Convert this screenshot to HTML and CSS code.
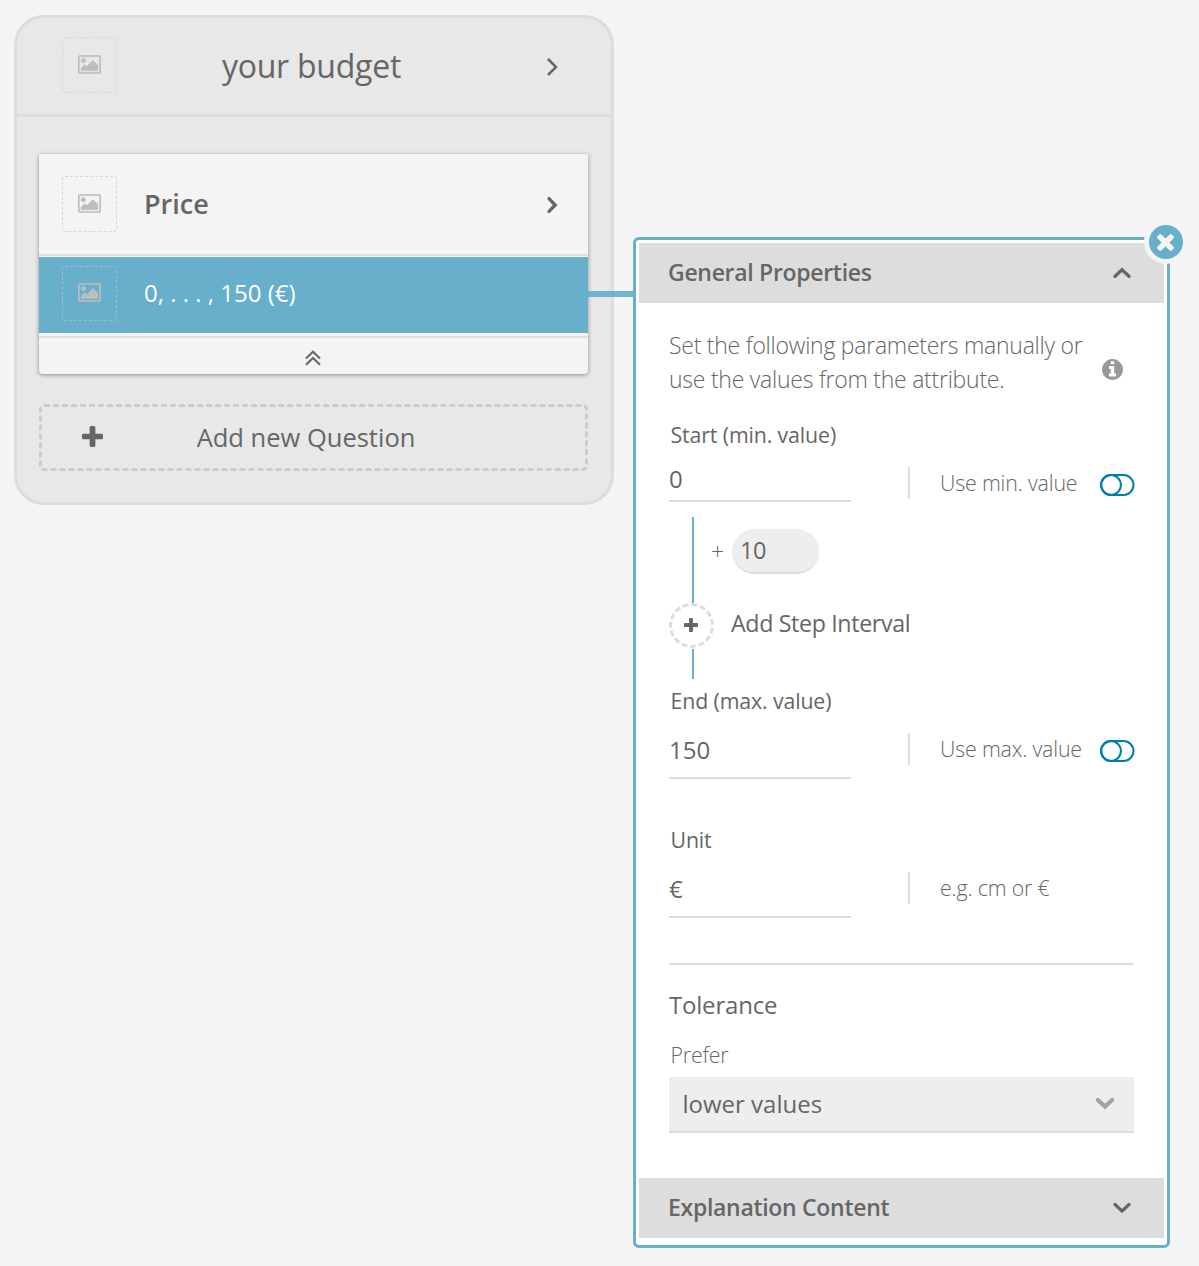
FILE: index.html
```html
<!DOCTYPE html>
<html lang="en">
<head>
<meta charset="utf-8">
<title>Question editor</title>
<link rel="stylesheet" href="styles.css">
</head>
<body>
<svg class="sprite" aria-hidden="true">
  <symbol id="picture" viewBox="-64 128 1920 1536"><path d="M576 576q0 80-56 136t-136 56-136-56-56-136 56-136 136-56 136 56 56 136zm1024 384v448h-1408v-192l320-320 160 160 512-512zm96-704h-1600q-13 0-22.5 9.5t-9.5 22.5v1216q0 13 9.5 22.5t22.5 9.5h1600q13 0 22.5-9.5t9.5-22.5v-1216q0-13-9.5-22.5t-22.5-9.5zm160 32v1216q0 66-47 113t-113 47h-1600q-66 0-113-47t-47-113v-1216q0-66 47-113t113-47h1600q66 0 113 47t47 113z"/></symbol>
  <symbol id="plus" viewBox="192 128 1408 1408"><path d="M1600 736v192q0 40-28 68t-68 28h-416v416q0 40-28 68t-68 28h-192q-40 0-68-28t-28-68v-416h-416q-40 0-68-28t-28-68v-192q0-40 28-68t68-28h416v-416q0-40 28-68t68-28h192q40 0 68 28t28 68v416h416q40 0 68 28t28 68z"/></symbol>
  <symbol id="toggle" viewBox="0 0 35 22"><rect x="1.1" y="1.1" width="32.4" height="19.8" rx="9.9"/><circle cx="11" cy="11" r="9.9"/></symbol>
</svg>
<main class="board">
  <section class="group">
    <header class="group-head">
      <span class="thumb"><svg class="pic"><use href="#picture"/></svg></span>
      <h1 class="group-title">your budget</h1>
      <svg class="chev thin" width="12" height="20" viewBox="0 0 12 20"><path d="M2 2l8 8-8 8"/></svg>
    </header>
    <div class="group-body">
      <article class="question">
        <div class="q-row">
          <span class="thumb"><svg class="pic"><use href="#picture"/></svg></span>
          <h2 class="q-title">Price</h2>
          <svg class="chev" width="12" height="20" viewBox="0 0 12 20"><path d="M3 3.6l6.2 6.4L3 16.4"/></svg>
        </div>
        <div class="a-row">
          <span class="thumb"><svg class="pic"><use href="#picture"/></svg></span>
          <span class="a-title">0, . . . , 150 (€)</span>
        </div>
        <div class="q-foot">
          <svg class="chev double" width="18" height="18" viewBox="0 0 18 18"><path d="M2 9.5L9 2.8l7 6.7M2 15.7L9 9l7 6.7"/></svg>
        </div>
      </article>
      <div class="add-question">
        <svg class="add-plus"><use href="#plus"/></svg>
        <span class="add-text">Add new Question</span>
      </div>
    </div>
  </section>
  <div class="connector"></div>
  <aside class="panel">
    <button class="close" aria-label="Close"><svg width="17" height="17" viewBox="302 366 1188 1188"><path d="M1490 1322q0 40-28 68l-136 136q-28 28-68 28t-68-28l-294-294-294 294q-28 28-68 28t-68-28l-136-136q-28-28-28-68t28-68l294-294-294-294q-28-28-28-68t28-68l136-136q28-28 68-28t68 28l294 294 294-294q28-28 68-28t68 28l136 136q28 28 28 68t-28 68l-294 294 294 294q28 28 28 68z"/></svg></button>
    <header class="bar"><h3 class="bar-title">General Properties</h3>
      <svg class="chev" width="20" height="12" viewBox="0 0 20 12"><path d="M3 9.3L10 2.7l7 6.6"/></svg></header>
    <div class="content">
      <div class="intro">
        <p class="intro-text">Set the following parameters manually or<br>use the values from the attribute.</p>
        <svg class="info" viewBox="128 128 1536 1536"><path d="M1152 1376v-160q0-14-9-23t-23-9h-96v-512q0-14-9-23t-23-9h-320q-14 0-23 9t-9 23v160q0 14 9 23t23 9h96v320h-96q-14 0-23 9t-9 23v160q0 14 9 23t23 9h448q14 0 23-9t9-23zm-128-896v-160q0-14-9-23t-23-9h-192q-14 0-23 9t-9 23v160q0 14 9 23t23 9h192q14 0 23-9t9-23zm640 416q0 209-103 385.5t-279.5 279.5-385.5 103-385.5-103-279.5-279.5-103-385.5 103-385.5 279.5-279.5 385.5-103 385.5 103 279.5 279.5 103 385.5z"/></svg>
      </div>
      <div class="field start">
        <label class="label" for="min">Start (min. value)</label>
        <div class="field-row">
          <input class="line-input short" id="min" value="0">
          <div class="hint"><span>Use min. value</span><svg class="toggle"><use href="#toggle"/></svg></div>
        </div>
      </div>
      <div class="steps">
        <div class="rail"><span class="rail-plus">+</span><input class="pill" value="10" aria-label="Step"></div>
        <div class="add-step"><span class="dot"><svg><use href="#plus"/></svg></span><span class="step-text">Add Step Interval</span></div>
        <div class="rail tail"></div>
      </div>
      <div class="field">
        <label class="label" for="max">End (max. value)</label>
        <div class="field-row">
          <input class="line-input" id="max" value="150">
          <div class="hint"><span>Use max. value</span><svg class="toggle"><use href="#toggle"/></svg></div>
        </div>
      </div>
      <div class="field unit">
        <label class="label" for="unit">Unit</label>
        <div class="field-row">
          <input class="line-input" id="unit" value="€">
          <div class="hint"><span>e.g. cm or €</span></div>
        </div>
      </div>
      <div class="tolerance">
        <h4 class="tol-title">Tolerance</h4>
        <span class="prefer">Prefer</span>
        <div class="select"><span>lower values</span>
          <svg class="chev soft" width="20" height="13" viewBox="0 0 20 13"><path d="M2.9 3L10 9.6 17.1 3"/></svg></div>
      </div>
    </div>
    <header class="bar"><h3 class="bar-title">Explanation Content</h3>
      <svg class="chev" width="20" height="12" viewBox="0 0 20 12"><path d="M3 2.5l7 6.6 7-6.6"/></svg></header>
  </aside>
</main>
</body>
</html>
```
FILE: styles.css
```css
* { box-sizing: border-box; }
body {
  margin: 0;
  background: #f4f4f4;
  color: #666;
  font-family: "Open Sans", sans-serif;
  font-size: 24px;
}
h1, h2, h3, h4, p { margin: 0; font-weight: 400; }
.sprite { display: none; }
.board { display: flex; align-items: flex-start; height: 1266px; overflow: hidden; }

.chev { flex: none; fill: none; stroke: #666; stroke-width: 3.3; stroke-linecap: round; }
.chev.thin { stroke-width: 2.5; stroke-linecap: butt; }
.chev.double { stroke-width: 2.1; stroke-linecap: butt; }
.chev.soft { stroke: #a3a3a3; stroke-width: 4.2; }

/* Question group */
.group {
  flex: none;
  width: 600px;
  height: 490px;
  margin: 15px 0 0 14px;
  background: #e8e8e8;
  border: 3px solid #ddd;
  border-radius: 30px;
}
.group-head {
  display: flex;
  align-items: center;
  height: 99px;
  padding: 0 53px 0 45px;
  border-bottom: 3px solid #ddd;
}
.group-title { flex: 1; margin-right: 40px; text-align: center; font-size: 32px; letter-spacing: -.25px; line-height: 40px; }
.group-head .chev { margin-top: 2px; }
.thumb {
  flex: none;
  display: flex;
  justify-content: center;
  width: 55px;
  height: 56px;
  padding-top: 17px;
  border: 1px dashed #d8d8d8;
  border-radius: 3px;
}
.group-head .thumb { margin-bottom: 2px; }
.pic { width: 23px; height: 19px; fill: #bdbdbd; stroke: #bdbdbd; stroke-width: 25; overflow: visible; }
.group-body { padding: 37px 23px 0 22px; }
.question {
  height: 220px;
  background: #f4f4f4;
  border-radius: 0 0 4px 4px;
  box-shadow: 0 1px 4px rgba(0, 0, 0, .4);
}
.q-row { display: flex; align-items: center; height: 102px; padding: 0 30px 0 23px; border-bottom: 2px solid #ddd; }
.q-title { flex: 1; margin-left: 27px; font-size: 27px; font-weight: 600; line-height: 40px; }
.q-row .chev { margin-top: 2px; }
.a-row {
  display: flex;
  align-items: center;
  height: 76px;
  margin-top: 1px;
  padding: 0 23px 3px;
  background: #67afca;
  color: #fff;
}
.a-row .thumb { height: 55px; border-color: #a3bcc5; padding-top: 16px; }
.a-title { margin: 0 0 2px 27px; font-size: 24px; line-height: 36px; }
.q-foot {
  display: flex;
  justify-content: center;
  height: 38px;
  margin-top: 3px;
  padding: 11px 1px 0 0;
  border-top: 2px solid #ddd;
}
.add-question {
  display: flex;
  align-items: center;
  height: 67px;
  margin-top: 30px;
  padding: 0 76px 2px 40px;
  border: 3px dashed #ccc;
  border-radius: 5px;
}
.add-plus { width: 21px; height: 21px; margin-bottom: 1px; fill: #666; }
.add-text { flex: 1; text-align: center; font-size: 25.5px; line-height: 36px; }

.connector { flex: none; width: 45px; height: 6px; margin: 291px 0 0 -26px; background: #67afca; opacity: .92; }

/* Properties panel */
.panel {
  position: relative;
  flex: none;
  width: 537px;
  height: 1011px;
  margin-top: 237px;
  padding: 3px;
  background: #fff;
  border: 3px solid #67afca;
  border-radius: 6px;
}
.close {
  position: absolute;
  top: -20px;
  right: -20.5px;
  display: flex;
  align-items: center;
  justify-content: center;
  width: 44px;
  height: 44px;
  padding: 0;
  background: #67afca;
  border: 5px solid #f4f4f4;
  border-radius: 50%;
}
.close svg { fill: #f4f4f4; }
.bar { display: flex; align-items: center; justify-content: space-between; height: 60px; padding: 0 32px 0 29px; background: #ddd; }
.bar-title { margin-bottom: 2px; font-size: 23px; font-weight: 600; letter-spacing: -.3px; line-height: 34px; }
.content { height: 875px; padding: 25px 30px 0; }
.intro { display: flex; justify-content: space-between; height: 68px; }
.intro-text { font-size: 23px; font-weight: 300; letter-spacing: -.25px; line-height: 34px; white-space: nowrap; }
.info { flex: none; width: 21px; height: 21px; margin: 31px 11px 0 0; fill: #999; }
.label { display: block; height: 30px; padding-left: 1.5px; font-size: 21.33px; letter-spacing: -.13px; line-height: 30px; }
.field.start { margin-top: 24px; }
.field.unit { margin-top: 46px; padding-bottom: 45px; border-bottom: 2px solid #ddd; }
.field-row { display: flex; align-items: flex-start; }
.line-input {
  width: 182px;
  height: 57px;
  margin: 6px 57px 0 0;
  padding: 0;
  background: none;
  border: 0;
  border-bottom: 2px solid #ddd;
  color: inherit;
  font: inherit;
}
.line-input.short { height: 44px; margin-top: 8px; padding-bottom: 2px; }
.hint {
  flex: 1;
  display: flex;
  align-items: center;
  justify-content: space-between;
  height: 32px;
  margin-top: 17px;
  padding-left: 30px;
  border-left: 2px solid #ddd;
  font-size: 21.33px;
  font-weight: 300;
  letter-spacing: -.16px;
  line-height: 32px;
  white-space: nowrap;
}
.toggle { width: 35px; height: 22px; margin: 4px -1px 0 0; fill: none; stroke: #007fab; stroke-width: 2; }
.steps { height: 184px; padding-top: 15px; }
.rail { display: flex; height: 86px; margin-left: 23px; padding: 12px 0 0 17px; border-left: 2px solid #67afca; }
.rail.tail { height: 30px; margin-top: 1px; padding: 0; }
.rail-plus { width: 21px; font-size: 23px; font-weight: 300; line-height: 45px; }
.pill {
  width: 87px;
  height: 45px;
  padding: 0 8px 2px;
  background: #eee;
  border: 0;
  border-bottom: 2px solid #ddd;
  border-radius: 23px;
  color: inherit;
  font: inherit;
  font-size: 23.5px;
  letter-spacing: -.5px;
}
.add-step { display: flex; height: 45px; }
.dot { display: flex; align-items: center; justify-content: center; width: 45px; height: 45px; padding: 0 1px 1px 0; border: 3px dashed #ddd; border-radius: 50%; }
.dot svg { width: 14px; height: 14px; fill: #666; }
.step-text { margin-left: 17px; font-size: 23.2px; letter-spacing: -.34px; line-height: 41px; }
.tol-title { margin-top: 24px; font-size: 24px; letter-spacing: -.2px; line-height: 31px; }
.prefer { display: block; margin: 20px 0 7px 1.5px; font-size: 21.33px; font-weight: 300; letter-spacing: -.15px; line-height: 30px; }
.select {
  display: flex;
  align-items: center;
  justify-content: space-between;
  height: 56px;
  padding: 0 19px 0 13.5px;
  background: #eee;
  border-bottom: 2px solid #ddd;
  line-height: 34px;
}
.select .chev { margin-bottom: 1px; }
```
